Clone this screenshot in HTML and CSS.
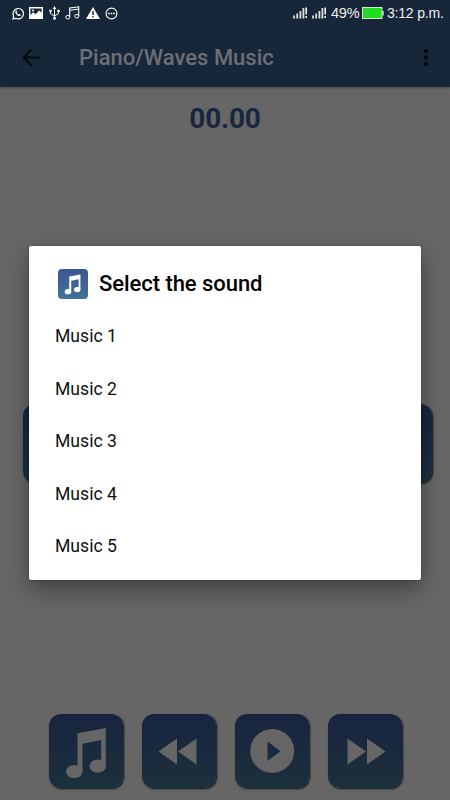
FILE: index.html
```html
<!DOCTYPE html>
<html lang="en">
<head>
<meta charset="utf-8">
<title>Piano/Waves Music</title>
<link rel="stylesheet" href="styles.css">
</head>
<body>
<svg width="0" height="0" class="defs"><defs>
<symbol id="note" viewBox="0 0 76 76"><g fill="currentColor"><path d="M28.500 19.200 56.800 14V52H52.200V26L33.500 29.800V57H28.500Z"/><ellipse cx="25.300" cy="57.500" rx="8.200" ry="6.600"/><ellipse cx="48.700" cy="52.200" rx="8.200" ry="6.600"/></g></symbol>
</defs></svg>
<div class="screen">
  <div class="status">
    <div class="notifs">
      <svg width="12" height="13" viewBox="0 0 12 13"><path d="M1 12 1.7 9.2A5.2 5.2 0 1 1 3.8 11.3Z" fill="none" stroke="#fff" stroke-width="1.2"/><path d="M3.8 3.7Q4.8 3.2 5.1 4.8L4.7 5.7Q5.4 7 6.6 7.6L7.5 7 9 8Q8 9.6 6 8.7 3.2 7.2 3.2 5Z" fill="#fff"/></svg>
      <svg width="14" height="12" viewBox="0 0 14 12"><path fill-rule="evenodd" d="M0 0H14V12H0ZM1.400 1.400V8L4.300 5.200 6.500 7.200 10.300 3.500 12.600 5.700V1.400Z" fill="#fff"/><circle cx="4" cy="3.400" r="1" fill="#fff"/></svg>
      <svg width="11" height="14" viewBox="0 0 11 14"><path d="M5.5 1.5V12M1.5 4.5V7.5L5.5 10 9.5 7.5V4.5" fill="none" stroke="#fff"/><path d="M5.5 0 7.3 3H3.7ZM.3 3.7H2.7V6H.3ZM8.3 3.7H10.7V6H8.3Z" fill="#fff"/><circle cx="5.5" cy="12.2" r="1.5" fill="#fff"/></svg>
      <svg width="15" height="14" viewBox="0 0 15 14"><path d="M4.700 11V2L13.700.8V10M4.700 4.200 13.700 3" fill="none" stroke="#fff" stroke-width="1.100"/><ellipse cx="2.800" cy="11.200" rx="2" ry="1.800" fill="none" stroke="#fff"/><ellipse cx="11.800" cy="10.200" rx="2" ry="1.800" fill="none" stroke="#fff"/></svg>
      <svg width="14" height="12" viewBox="0 0 14 12"><path fill-rule="evenodd" d="M7 0 14 12H0ZM6.300 4V8H7.700V4ZM6.300 9V10.400H7.700V9Z" fill="#fff"/></svg>
      <svg width="13" height="13" viewBox="0 0 13 13"><circle cx="6.500" cy="6.500" r="5.400" fill="none" stroke="#fff" stroke-width="1.100"/><path d="M3.200 6.500H9.800" stroke="#fff" stroke-width="1.500" stroke-dasharray="1.600 .9"/></svg>
    </div>
    <div class="system">
      <svg width="15" height="12" viewBox="0 0 15 12"><path d="M1 8.500V11.500M4.200 6.500V11.500M7.400 4V11.500M10.400 1V11.500" stroke="#ddd" stroke-width="1.800"/><path d="M13.200.5V7.500M13.200 9V11" stroke="#fff" stroke-width="1.500"/></svg>
      <svg width="15" height="12" viewBox="0 0 15 12" class="signal2"><path d="M1 8.500V11.500M4.200 6.500V11.500M7.400 4V11.500M10.400 1V11.500" stroke="#ddd" stroke-width="1.800"/><path d="M13.200.5V7.500M13.200 9V11" stroke="#fff" stroke-width="1.500"/></svg>
      <span class="percent">49%</span>
      <svg width="22" height="12" viewBox="0 0 22 12" class="battery"><rect x=".5" y=".5" width="19.500" height="11" fill="#20dd20" stroke="#ddd"/><path d="M21 4V8.500" stroke="#ddd" stroke-width="1.500"/></svg>
      <span class="clock">3:12 p.m.</span>
    </div>
  </div>
  <header class="appbar">
    <svg class="back" width="20" height="18" viewBox="0 0 20 18"><path d="M17.500 8.500H1.500M9.500.5 1.500 8.500 9.500 16.500" fill="none" stroke="#05080c" stroke-width="2"/></svg>
    <h1>Piano/Waves Music</h1>
    <svg class="more" width="6" height="18" viewBox="0 0 6 18"><g fill="#05070a"><circle cx="3" cy="1.900" r="2.200"/><circle cx="3" cy="8.500" r="2.200"/><circle cx="3" cy="15" r="2.200"/></g></svg>
  </header>
  <div class="timer">00.00</div>
  <div class="wide"></div>
  <nav class="controls">
    <div class="key"><svg width="76" height="76"><use href="#note"/></svg></div>
    <div class="key"><svg width="76" height="76" viewBox="0 0 76 76"><path d="M35 24.500V50.500L16.500 37.500ZM54.500 24.500V50.500L36 37.500Z" fill="currentColor"/></svg></div>
    <div class="key"><svg width="76" height="76" viewBox="0 0 76 76"><path fill-rule="evenodd" d="M37.200 15a22 22 0 1 0 0 44 22 22 0 1 0 0-44ZM32.500 27.500 45.500 37.200 32.500 47Z" fill="currentColor"/></svg></div>
    <div class="key"><svg width="76" height="76" viewBox="0 0 76 76"><path d="M19.500 24.500V50.500L38 37.500ZM39 24.500V50.500L57.500 37.500Z" fill="currentColor"/></svg></div>
  </nav>
  <div class="dialog">
    <div class="heading"><span class="badge"><svg width="30" height="30"><use href="#note"/></svg></span><h2>Select the sound</h2></div>
    <ul><li>Music 1</li><li>Music 2</li><li>Music 3</li><li>Music 4</li><li>Music 5</li></ul>
  </div>
</div>
</body>
</html>
```
FILE: styles.css
```css
* { box-sizing: border-box; }
body { margin: 0; font-family: Roboto, sans-serif; }
h1, h2, ul { margin: 0; padding: 0; font-weight: 500; list-style: none; }
svg { display: block; flex: none; }
.defs { position: absolute; }
.screen { position: relative; width: 450px; height: 800px; overflow: hidden; background: #666; display: flex; flex-direction: column; }
.status { height: 28px; background: #172638; display: flex; justify-content: space-between; padding: 0 6px 0 12px; color: #eee; font: 15px "Liberation Sans", sans-serif; }
.notifs, .system { display: flex; align-items: center; height: 26px; }
.notifs { gap: 5.400px; }
.signal2 { margin-left: 4px; }
.percent { margin-left: 4px; width: 29px; font-size: 14.500px; letter-spacing: -.2px; }
.battery { margin-left: 2px; }
.clock { margin-left: 3px; width: 57px; font-size: 14px; letter-spacing: -.2px; white-space: nowrap; }
.appbar { height: 59px; background: #172639; display: flex; align-items: center; padding: 0 21px 0 22px; box-shadow: 0 1px 2px #4a4a50; }
.appbar h1 { margin-left: 37px; flex: 1; font-size: 22px; line-height: 28px; color: #6b7077; }
.timer { height: 62px; text-align: center; font-size: 28px; font-weight: 700; line-height: 63px; letter-spacing: -.2px; color: #18273d; }
.wide { margin: 255px 18px 0 23px; height: 79px; border-radius: 12px; background: linear-gradient(#18253f, #1b303d); box-shadow: 1px 1px 2px #111; }
.controls { display: flex; gap: 19px; margin: 231px 0 0 48.500px; }
.key { width: 74px; height: 74px; border-radius: 12px; color: #666; background: linear-gradient(#18243f, #1b303c); box-shadow: 1px 1px 2px #111; }
.dialog { position: absolute; left: 29px; top: 246px; width: 392px; height: 334px; background: #fff; border-radius: 2px; box-shadow: 0 9px 22px rgba(0,0,0,.38), 0 0 2px rgba(0,0,0,.4); color: #111; }
.heading { display: flex; align-items: center; padding: 22px 0 0 29px; height: 53px; }
.badge { width: 30px; height: 30px; border-radius: 4px; color: #fff; background: linear-gradient(#3b5593, #407398); }
.heading h2 { margin-left: 11px; font-size: 22px; line-height: 30px; letter-spacing: -.05px; color: #000; }
.dialog ul { padding: 11px 26px 0; font-weight: 400; }
.dialog li { height: 52.500px; line-height: 53px; font-size: 17.600px; }
```
